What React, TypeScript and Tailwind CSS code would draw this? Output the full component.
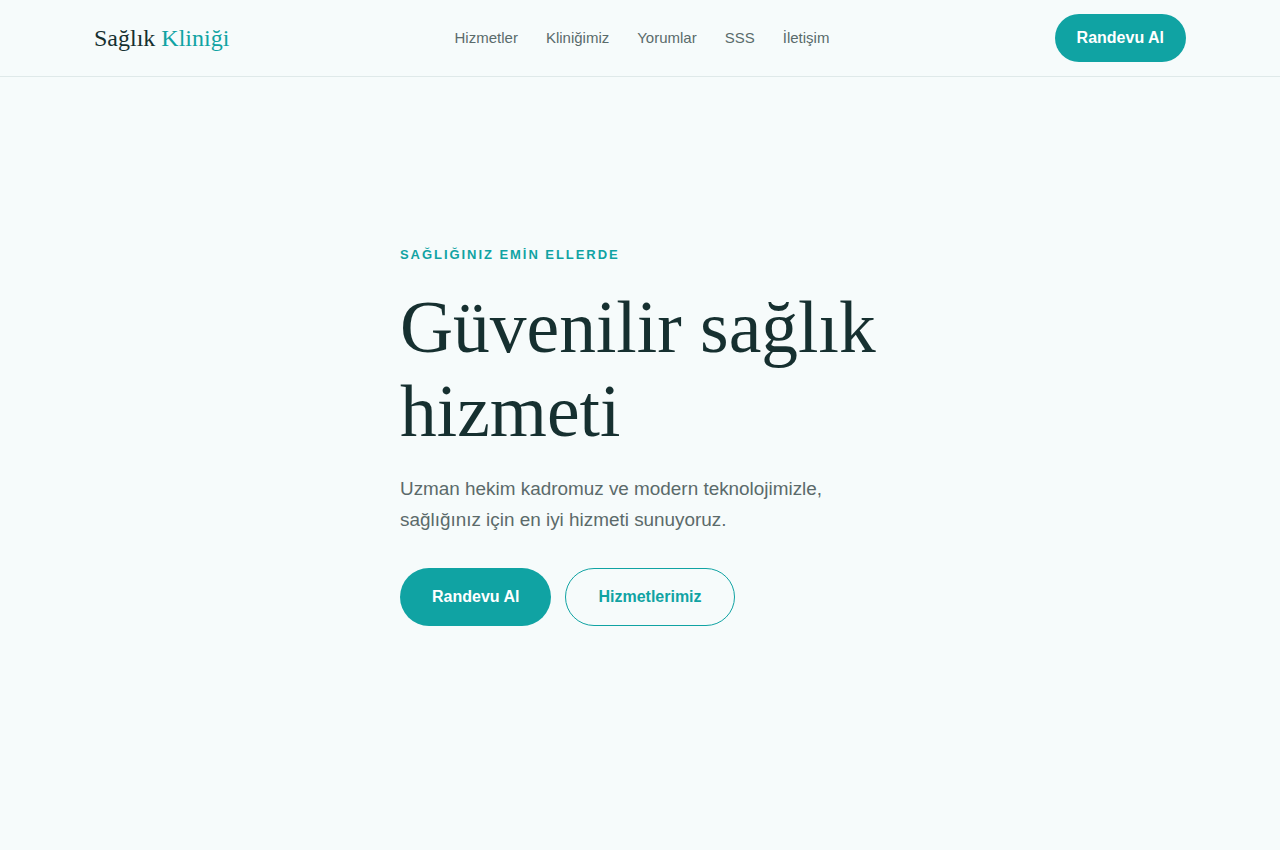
const navLinks = ['Hizmetler', 'Kliniğimiz', 'Yorumlar', 'SSS', 'İletişim'];

export default function App() {
  return (
    <div className="min-h-screen bg-[#f6fbfb] font-['Liberation_Sans',Arial,sans-serif]">
      {/* Header */}
      <header className="border-b border-[#dfe9e9]">
        <div className="mx-auto flex h-[76px] max-w-6xl items-center justify-between px-[30px]">
          <a href="#" className="font-['Liberation_Serif','Times_New_Roman',serif] text-[24px] leading-8 text-[#163030]">
            Sağlık <span className="text-[#10a3a3]">Kliniği</span>
          </a>
          <nav className="flex items-center gap-7">
            {navLinks.map((l) => (
              <a key={l} href="#" className="text-[15px] text-[#5a6b6b] hover:text-[#10a3a3]">
                {l}
              </a>
            ))}
          </nav>
          <a
            href="#"
            className="rounded-full bg-[#10a3a3] px-[22px] py-3 text-[16px] font-bold leading-6 text-white"
          >
            Randevu Al
          </a>
        </div>
      </header>

      {/* Hero */}
      <section className="pt-[168px] pb-32">
        <div className="mx-auto w-[480px]">
          <div className="text-[13px] font-bold uppercase leading-5 tracking-[0.15em] text-[#10a3a3]">
            SAĞLIĞINIZ EMİN ELLERDE
          </div>
          <h1 className="mt-[21px] font-['Liberation_Serif','Times_New_Roman',serif] text-[73.5px] font-normal leading-[84px] text-[#163030]">
            Güvenilir sağlık hizmeti
          </h1>
          <p className="mt-[19px] text-[18.9px] leading-[31px] text-[#5b6a6a]">
            Uzman hekim kadromuz ve modern teknolojimizle, sağlığınız için en iyi hizmeti sunuyoruz.
          </p>
          <div className="mt-[33px] flex gap-[14px]">
            <a
              href="#"
              className="rounded-full bg-[#10a3a3] px-8 py-[17px] text-[16px] font-bold leading-6 text-white"
            >
              Randevu Al
            </a>
            <a
              href="#"
              className="rounded-full border border-[#10a3a3] px-8 py-4 text-[16px] font-bold leading-6 text-[#10a3a3]"
            >
              Hizmetlerimiz
            </a>
          </div>
        </div>
      </section>
    </div>
  );
}
